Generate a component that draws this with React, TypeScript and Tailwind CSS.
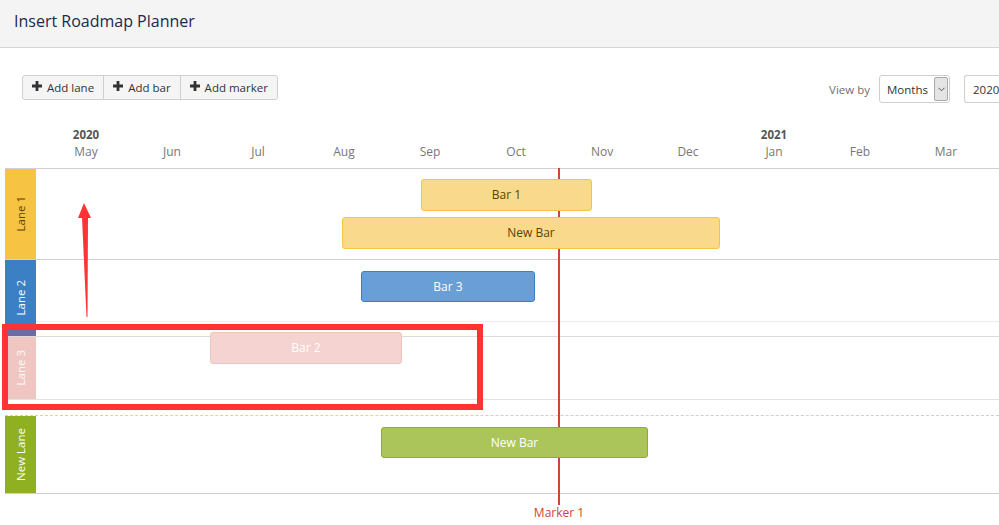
import React from 'react';

const months = ['May', 'Jun', 'Jul', 'Aug', 'Sep', 'Oct', 'Nov', 'Dec', 'Jan', 'Feb', 'Mar'];

function PlusIcon() {
  return (
    <svg width="10" height="10" viewBox="0 0 10 10" className="mr-[5px] -mt-[3px]">
      <path d="M3.6 0h2.8v3.6H10v2.8H6.4V10H3.6V6.4H0V3.6h3.6z" fill="#333" />
    </svg>
  );
}

function ToolButton({ label, first, last }: { label: string; first?: boolean; last?: boolean }) {
  return (
    <button
      className={`flex items-center h-[25px] px-[9px] bg-[#f5f5f5] border border-[#cfcfcf] text-[11.5px] text-[#333] ${
        first ? 'rounded-l-[3px]' : '-ml-px'
      } ${last ? 'rounded-r-[3px]' : ''}`}
    >
      <PlusIcon />
      {label}
    </button>
  );
}

function LaneLabel({ text, className }: { text: string; className: string }) {
  return (
    <div className={`w-[31px] shrink-0 flex items-center justify-center relative ${className}`}>
      <span className="[writing-mode:vertical-rl] rotate-180 text-[11.5px] leading-none whitespace-nowrap">
        {text}
      </span>
    </div>
  );
}

function Bar({
  label,
  className,
  left,
  top,
  width,
  height = 32,
}: {
  label: string;
  className: string;
  left: number;
  top: number;
  width: number;
  height?: number;
}) {
  return (
    <div
      className={`absolute z-10 flex items-center justify-center rounded-[3px] border text-[12px] ${className}`}
      style={{ left, top, width, height }}
    >
      {label}
    </div>
  );
}

export default function App() {
  return (
    <div className="relative w-[999px] h-[525px] overflow-hidden bg-white font-['Open_Sans',sans-serif]">
      {/* header */}
      <div className="h-[48px] bg-[#f4f4f4] border-b border-[#d6d6d6] px-[14px] pt-[9px]">
        <h1 className="text-[16px] text-[#172b4d] leading-[24px]">Insert Roadmap Planner</h1>
      </div>

      {/* toolbar */}
      <div className="flex items-start justify-between pl-[22px] mt-[27px] h-[28px]">
        <div className="flex">
          <ToolButton label="Add lane" first />
          <ToolButton label="Add bar" />
          <ToolButton label="Add marker" last />
        </div>
        <div className="flex items-center">
          <span className="text-[11.5px] text-[#707070] mr-[9px] mt-[1px]">View by</span>
          <div className="flex items-center w-[71px] h-[28px] border border-[#cfcfcf] rounded-[3px] pl-[7px] pr-px">
            <span className="text-[11.5px] text-[#333] flex-1 mt-[2px]">Months</span>
            <span className="w-[14px] h-[24px] bg-[#e4e4e4] border border-[#aaa] rounded-[2px] flex items-center justify-center">
              <svg width="7" height="5" viewBox="0 0 7 5">
                <path d="M0.5 0.8L3.5 3.8L6.5 0.8" stroke="#555" fill="none" strokeWidth="1" />
              </svg>
            </span>
          </div>
          <div className="ml-[14px] w-[35px] h-[28px] overflow-hidden border border-[#cfcfcf] rounded-l-[3px] border-r-0 pl-[8px] flex items-center">
            <span className="text-[11.5px] text-[#333] mt-[2px] whitespace-nowrap">2020</span>
          </div>
        </div>
      </div>

      {/* timeline header */}
      <div className="pl-[43px] mt-[23px]">
        <div className="flex h-[17px]">
          {months.map((m) => (
            <div key={'y' + m} className="w-[86px] shrink-0 text-center text-[11.5px] font-bold text-[#555] leading-[17px]">
              {m === 'May' ? '2020' : m === 'Jan' ? '2021' : ''}
            </div>
          ))}
        </div>
        <div className="flex h-[25px]">
          {months.map((m) => (
            <div key={m} className="w-[86px] shrink-0 text-center text-[12px] text-[#777] leading-[18px]">
              {m}
            </div>
          ))}
        </div>
      </div>

      {/* lanes */}
      <div className="ml-[5px] border-t border-[#d0d0d0]">
        {/* lane 1 */}
        <div className="relative flex h-[91px] border-b border-[#d0d0d0]">
          <LaneLabel text="Lane 1" className="bg-[#f6c342] text-[#594300]" />
          <div className="flex-1" />
          <Bar label="Bar 1" left={416} top={10} width={171} className="bg-[#f9da8c] border-[#f6c342] text-[#594300]" />
          <Bar label="New Bar" left={337} top={48} width={378} className="bg-[#f9da8c] border-[#f6c342] text-[#594300]" />
        </div>

        {/* lane 2 */}
        <div className="relative flex h-[77px] border-b border-[#dcdcdc]">
          <LaneLabel text="Lane 2" className="bg-[#3b7fc4] text-white" />
          <div className="flex-1">
            <div className="h-[62px] border-b border-[#ececec]" />
          </div>
          <div className="absolute left-0 bottom-0 w-[31px] h-[7px] bg-[#676ea0]" />
          <Bar label="Bar 3" left={356} top={11} width={174} height={31} className="bg-[#6a9ed6] border-[#3b7fc4] text-white" />
        </div>

        {/* lane 3 (being dragged) */}
        <div className="relative flex h-[63px] border-b border-[#e2e2e2]">
          <LaneLabel text="Lane 3" className="bg-[#f0c6c2] text-white/90" />
          <div className="flex-1" />
          <Bar label="Bar 2" left={205} top={-5} width={192} className="bg-[#f4d3d0] border-[#efc3be] text-white" />
        </div>

        <div className="h-[16px] border-b border-dashed border-[#cfcfcf]" />

        {/* new lane */}
        <div className="relative flex h-[78px] border-b border-[#d0d0d0]">
          <LaneLabel text="New Lane" className="bg-[#8eb021] text-white" />
          <div className="flex-1" />
          <Bar label="New Bar" left={376} top={11} width={267} height={31} className="bg-[#acc55a] border-[#8eb021] text-white" />
        </div>
      </div>

      {/* marker */}
      <div className="absolute left-[558px] top-[168px] w-[2px] h-[337px] bg-[#d04437]" />
      <div className="absolute left-[509px] top-[504px] w-[100px] text-center text-[12px] text-[#d04437]">Marker 1</div>

      {/* annotation */}
      <div className="absolute left-[2px] top-[324px] w-[481px] h-[86px] border-[6px] border-[#ff3333] z-20" />
      <svg className="absolute left-0 top-0 z-20 pointer-events-none" width="120" height="330">
        <polygon points="84,203 78,218 91,218" fill="#ff3333" />
        <polygon points="82,217 88,217 87.5,317 86.5,317" fill="#ff3333" />
      </svg>
    </div>
  );
}
